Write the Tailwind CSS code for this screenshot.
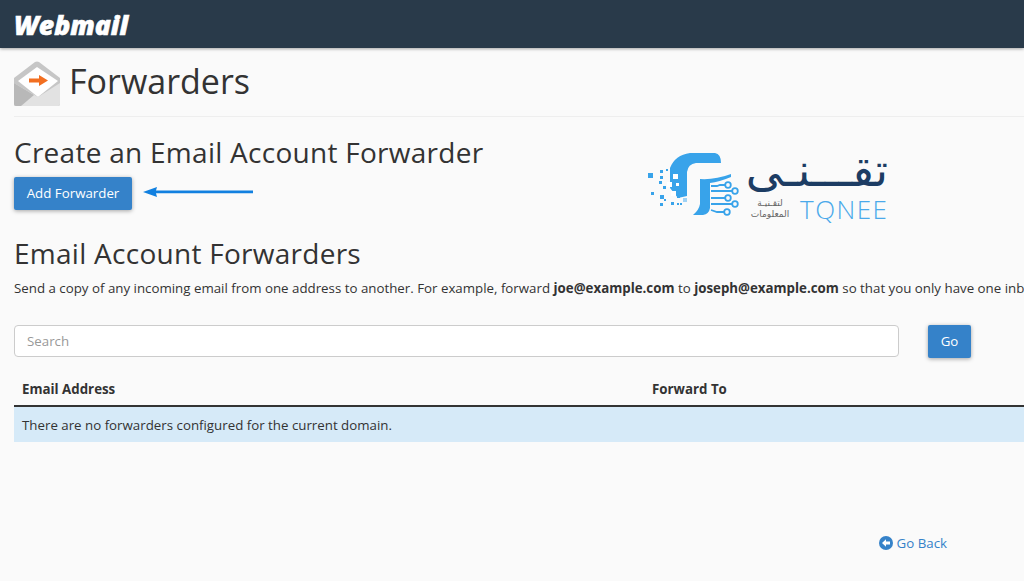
<!DOCTYPE html>
<html lang="en">
<head>
    <meta charset="UTF-8">
    <meta name="viewport" content="width=device-width, initial-scale=1.0">
    <title>Forwarders</title>
    <script src="https://cdn.jsdelivr.net/npm/@tailwindcss/browser@4"></script>
</head>
<body class="bg-[#fafafa] h-[581px] w-[1024px] overflow-hidden font-['Open_Sans',sans-serif] text-[#333]">

    <!-- Top bar -->
    <header class="h-[48px] bg-[#293a4a] shadow-[0_1px_3px_rgba(0,0,0,0.35)] pl-[14px] pt-[7px]">
        <span class="block text-[26.5px] leading-[36px] font-extrabold italic text-white [-webkit-text-stroke:0.6px_white] font-['Open_Sans',sans-serif]">Webmail</span>
    </header>

    <main class="pl-[14px] w-[1024px]">
        <!-- Page title -->
        <div class="flex items-center gap-[9px] h-[69px] border-b border-[#eeeeee] w-[1010px]">
            <svg width="46" height="46" viewBox="0 0 46 46" class="shrink-0 mt-[3px]">
                <path d="M0 17 L21 1 Q23 0 25 1 L46 17 L46 43 Q46 45 44 45 L2 45 Q0 45 0 43 Z" fill="#c6c6c6"/>
                <path d="M4 20 L23 6 L44 20 L24 36 Z" fill="#ffffff"/>
                <path d="M0 22 L24 36 L46 22 V43 Q46 45 44 45 H2 Q0 45 0 43 Z" fill="#e2e2e2"/>
                <path d="M0 22 L20 34 L7 45 H2 Q0 45 0 43 Z" fill="#b8b8b8"/>
                <path d="M15 17.5 H25 V14 L34 19.5 L25 25 V21.5 H15 Z" fill="#f26f21"/>
            </svg>
            <h1 class="text-[34px] leading-[44px] font-normal text-[#333] mt-[-3px]">Forwarders</h1>
        </div>

        <!-- Create section + logo -->
        <div class="flex h-[116px]">
            <div class="w-[620px] shrink-0">
                <h2 class="text-[28px] leading-[36px] mt-[17px] font-normal text-[#333] tracking-[0.27px]">Create an Email Account Forwarder</h2>
                <div class="flex items-center mt-[7px]">
                    <button class="w-[118px] h-[33px] bg-[#3582c9] rounded-[2px] text-white text-[13.3px] shadow-[0_1px_4px_rgba(0,0,0,0.35)]">Add Forwarder</button>
                    <svg width="112" height="12" viewBox="0 0 112 12" class="ml-[10px] mt-[-3px]">
                        <path d="M1 6 L15 1 L14 4.6 L111 4.6 L111 7.2 L14 7.2 L15 11 Z" fill="#1180e0"/>
                    </svg>
                </div>
            </div>

            <!-- TQNEE logo -->
            <div class="relative w-[250px] h-[70px] mt-[33px] ml-[10px]">
                <svg width="100" height="72" viewBox="0 0 100 72" class="absolute left-[1px] top-0">
                    <path d="M25 18 Q30 5 45 3 H70 Q76 4 76 13 H51 Q43 14 42 22 V46 L33 48 L25 38 Z" fill="#38a3ea"/>
                    <path d="M55 29 Q70 30 86 24 V27 Q74 32 65 33 V58 Q64 64 58 65 L48 65 Q54 60 55 54 Z" fill="#38a3ea"/>
                    <g fill="#38a3ea">
                        <rect x="3" y="23" width="5" height="5"/><rect x="15" y="20" width="3" height="3"/><rect x="15" y="26" width="3" height="3"/><rect x="21" y="19" width="2" height="2"/>
                        <rect x="14" y="31" width="3" height="3"/><rect x="18" y="36" width="3" height="3"/><rect x="6" y="42" width="3" height="3"/>
                        <rect x="15" y="45" width="4" height="4"/><rect x="19" y="49" width="2" height="2"/><rect x="15" y="53" width="3" height="3"/>
                        <rect x="26" y="52" width="3" height="3"/><rect x="32" y="53" width="2" height="2"/><rect x="35" y="53" width="2" height="2"/>
                        <rect x="35" y="39" width="5" height="5"/><rect x="32" y="45" width="3" height="3"/>
                    </g>
                    <g fill="#ffffff">
                        <rect x="28" y="24" width="5" height="5"/><rect x="22" y="32" width="5" height="5"/><rect x="31" y="33" width="3" height="3"/><rect x="26" y="41" width="5" height="5"/>
                    </g>
                    <rect x="38" y="48" width="4" height="4" fill="#9fd2f5"/>
                    <g fill="none" stroke="#38a3ea" stroke-width="1.8">
                        <circle cx="83" cy="35" r="2.8"/><circle cx="90" cy="41" r="2.8"/><circle cx="83" cy="48" r="2.8"/><circle cx="90" cy="54" r="2.8"/><circle cx="82" cy="62" r="2.8"/>
                        <path d="M66 36 L72 36 L75 35 H80 M66 41 H87 M66 48 H80 M66 54 H87 M66 60 L72 62 H79"/>
                    </g>
                </svg>
                <span dir="rtl" class="absolute right-[6px] top-[-10px] text-[46px] leading-[60px] text-[#1c3c63] font-['DejaVu_Sans',sans-serif] whitespace-nowrap">تقـــنـى</span>
                <span dir="rtl" class="absolute left-[104px] top-[48px] w-[44px] text-center text-[9px] leading-[11px] text-[#666] font-['DejaVu_Sans',sans-serif] whitespace-nowrap">لتقـنيـة<br>المعلومات</span>
                <span class="absolute left-[156px] top-[45px] text-[26px] leading-[28px] font-light tracking-[1.5px] text-[#4aa9ea] font-['Open_Sans',sans-serif]">TQNEE</span>
            </div>
        </div>

        <!-- Forwarders list -->
        <h2 class="text-[28px] leading-[36px] mt-[2px] font-normal text-[#333] tracking-[0.27px]">Email Account Forwarders</h2>
        <p class="text-[13.3px] leading-[20px] mt-[7px] whitespace-nowrap text-[#333]">Send a copy of any incoming email from one address to another. For example, forward <b>joe@example.com</b> to <b>joseph@example.com</b> so that you only have one inbox.</p>

        <div class="flex items-start mt-[27px]">
            <input type="text" placeholder="Search" class="w-[885px] h-[32px] px-[12px] text-[13.3px] bg-white border border-[#cccccc] rounded-[4px] placeholder:text-[#999]">
            <button class="ml-[29px] w-[43px] h-[33px] bg-[#3582c9] rounded-[2px] text-white text-[13.3px] shadow-[0_1px_4px_rgba(0,0,0,0.35)]">Go</button>
        </div>

        <!-- Table -->
        <div class="flex h-[35px] mt-[14px] pt-[2px] items-center pl-[8px] border-b-2 border-[#333] text-[13.3px] font-bold text-[#333] w-[1010px]">
            <div class="w-[630px]">Email Address</div>
            <div>Forward To</div>
        </div>
        <div class="h-[35px] bg-[#d6eaf8] pl-[8px] text-[13.3px] leading-[37px] text-[#333] w-[1010px]">There are no forwarders configured for the current domain.</div>

        <!-- Go back link -->
        <div class="flex justify-end mt-[91px] pr-[77px]">
            <a href="#" class="flex items-center gap-[4px] text-[13.3px] leading-[20px] text-[#3582c9]">
                <svg width="14" height="14" viewBox="0 0 14 14">
                    <circle cx="7" cy="7" r="7" fill="#3582c9"/>
                    <path d="M3 7 L7 3.2 V5.6 H11 V8.4 H7 V10.8 Z" fill="#fff"/>
                </svg>
                Go Back
            </a>
        </div>
    </main>

</body>
</html>
